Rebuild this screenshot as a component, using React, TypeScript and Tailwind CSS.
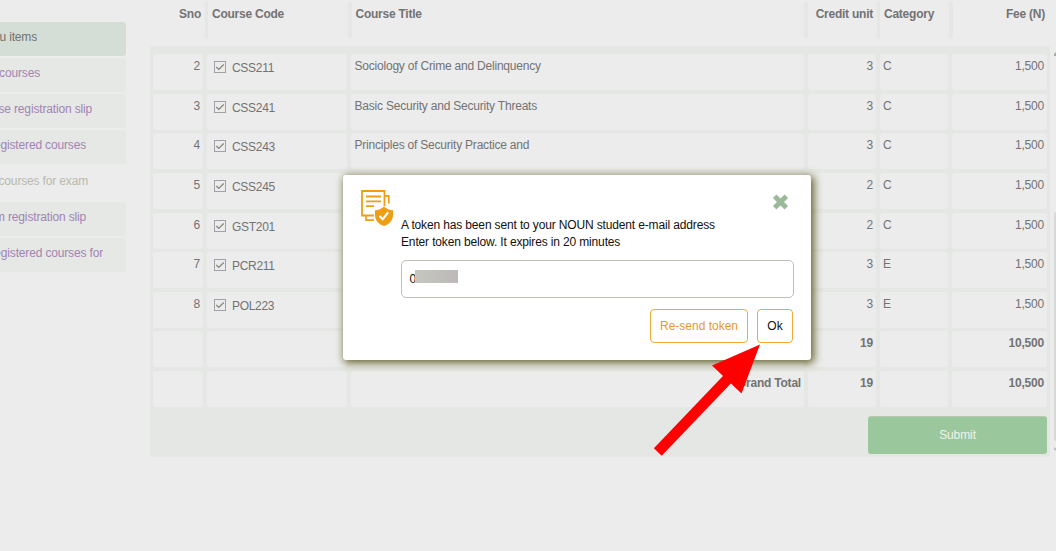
import React from "react";

type Item = { label: string; width: string; tone: string };

const menu: Item[] = [
  { label: "u items", width: "w-[37px]", tone: "h-[34px] bg-[#d5ded6] text-[#707370]" },
  { label: "courses", width: "w-[40px]", tone: "h-[34px] bg-[#e5e8e5] text-[#a383b4]" },
  { label: "se registration slip", width: "w-[92px]", tone: "h-[34px] bg-[#e5e8e5] text-[#a383b4]" },
  { label: "egistered courses", width: "w-[86px]", tone: "h-[34px] bg-[#e5e8e5] text-[#a383b4]" },
  { label: "courses for exam", width: "w-[88px]", tone: "h-[34px] text-[#b9b9ae]" },
  { label: "m registration slip", width: "w-[86px]", tone: "h-[34px] bg-[#e5e8e5] text-[#a383b4]" },
  { label: "egistered courses for", width: "w-[103px]", tone: "h-[34px] bg-[#e5e8e5] text-[#a383b4]" },
];

type Row = { sno: string; code: string; title: string; unit: string; cat: string; fee: string; bold?: boolean };

const rows: Row[] = [
  { sno: "2", code: "CSS211", title: "Sociology of Crime and Delinquency", unit: "3", cat: "C", fee: "1,500" },
  { sno: "3", code: "CSS241", title: "Basic Security and Security Threats", unit: "3", cat: "C", fee: "1,500" },
  { sno: "4", code: "CSS243", title: "Principles of Security Practice and", unit: "3", cat: "C", fee: "1,500" },
  { sno: "5", code: "CSS245", title: "", unit: "2", cat: "C", fee: "1,500" },
  { sno: "6", code: "GST201", title: "", unit: "2", cat: "C", fee: "1,500" },
  { sno: "7", code: "PCR211", title: "", unit: "3", cat: "E", fee: "1,500" },
  { sno: "8", code: "POL223", title: "", unit: "3", cat: "E", fee: "1,500" },
  { sno: "", code: "", title: "", unit: "19", cat: "", fee: "10,500", bold: true },
  { sno: "", code: "", title: "Grand Total", unit: "19", cat: "", fee: "10,500", bold: true },
];

const cell = "rounded-[3px] bg-[#ececec] px-[3px] pt-1";

function Checkbox() {
  return (
    <svg width="12" height="12" viewBox="0 0 12 12" className="mt-[3px] shrink-0" fill="none">
      <rect x="0.5" y="0.5" width="11" height="11" stroke="#a2a1a9" />
      <path d="M2.3 6 4.8 8.4 9.7 3.5" stroke="#85867c" strokeWidth="1.3" />
    </svg>
  );
}

function CourseRow({ row }: { row: Row }) {
  return (
    <div
      className={`grid h-9 shrink-0 grid-cols-[50px_140px_453px_68px_68px_95px] gap-1 tracking-[-0.21px] ${row.bold ? "font-bold" : ""}`}
    >
      <div className={`${cell} text-right`}>{row.sno}</div>
      <div className={`${cell} flex gap-[6px] pl-[7px]`}>
        {row.code && (
          <>
            <Checkbox />
            <span className="pt-[2px] tracking-[-0.3px]">{row.code}</span>
          </>
        )}
      </div>
      <div className={`${cell} ${row.bold ? "text-right" : "pl-[3.5px]"}`}>{row.title}</div>
      <div className={`${cell} text-right`}>{row.unit}</div>
      <div className={cell}>{row.cat}</div>
      <div className={`${cell} text-right`}>{row.fee}</div>
    </div>
  );
}

function TableHeader() {
  return (
    <div className="mt-px flex h-9 font-bold tracking-[-0.24px]">
      <div className="w-[55px] pt-1 pr-[4px] text-right">Sno</div>
      <div className="w-[3px] bg-[#e5e7e4]" />
      <div className="w-[140px] pt-1 pl-1">Course Code</div>
      <div className="w-1 bg-[#e5e7e4]" />
      <div className="w-[452px] pt-1 pl-[3.5px]">Course Title</div>
      <div className="w-[4px] bg-[#e5e7e4]" />
      <div className="w-[69px] pt-1 pr-[4px] text-right">Credit unit</div>
      <div className="w-[3px] bg-[#e5e7e4]" />
      <div className="w-[69px] pt-1 pl-[4px]">Category</div>
      <div className="w-[4px] bg-[#e5e7e4]" />
      <div className="w-[97px] pt-1 pr-[5px] text-right">Fee (N)</div>
    </div>
  );
}

function TokenIcon() {
  return (
    <svg width="34" height="38" viewBox="0 0 34 38" fill="none" stroke="#ef9d13">
      <path d="M24.5 17V2H2V26.5H14" strokeWidth="1.8" />
      <path d="M25 6.8H28.8V14.500M6 27V31.2H14" strokeWidth="1.7" />
      <path d="M6 7.5H21M6 12.3H21M6 17.2H14" strokeWidth="1.8" />
      <path
        d="M24 17.5C26.5 20 29.5 21 33 21.2V26C33 31.5 29 35.5 24 37C19 35.5 15 31.5 15 26V21.2C18.5 21 21.5 20 24 17.5Z"
        fill="#ef9d13"
        stroke="none"
      />
      <path d="M19.5 27 22.7 30.2 28.2 23.3" stroke="#fff" strokeWidth="2.2" />
    </svg>
  );
}

function TokenDialog() {
  return (
    <div className="absolute top-[175px] left-[343px] h-[185px] w-[468px] rounded-[3px] bg-white text-[#111] shadow-[2px_2px_8px_1px_#66642f]">
      <div className="flex h-[42px] items-start justify-between pt-[14px] pr-[22px] pl-[17px]">
        <TokenIcon />
        <svg width="17" height="17" viewBox="0 0 17 17" className="mt-[5px]">
          <path d="M2.7 2.2 14.3 13.8M14.3 2.2 2.7 13.8" stroke="#9cba9a" strokeWidth="5" />
        </svg>
      </div>
      <div className="pr-[17px] pl-[58px]">
        <p className="leading-[17px] tracking-[-0.145px]">A token has been sent to your NOUN student e-mail address</p>
        <p className="leading-[17px] tracking-[-0.145px]">Enter token below. It expires in 20 minutes</p>
        <div className="mt-[8.5px] flex h-[38px] items-center rounded-[5px] border border-[#bfbfb8] pl-[7.5px]">
          <span>0</span>
          <span className="-ml-[1.5px] mb-[5px] h-[13px] w-[43px] bg-linear-to-r from-[#c5c7bf] to-[#bdb9b9]" />
        </div>
        <div className="mt-[11px] flex justify-end gap-[9px] pr-px">
          <button className="h-[34px] w-[98px] rounded-[4px] border border-[#f3ab35] pt-px text-[#e39b28]">
            Re-send token
          </button>
          <button className="h-[34px] w-[36px] rounded-[4px] border border-[#f3ab35] pt-px">Ok</button>
        </div>
      </div>
    </div>
  );
}

export default function App() {
  return (
    <div className="relative flex h-[551px] w-[1056px] overflow-hidden bg-[#ececec] font-['Liberation_Sans',Arial,sans-serif] text-[12px] leading-4 text-[#737373]">
      <nav className="flex w-[126px] shrink-0 flex-col gap-[2px] pt-[22px]">
        {menu.map((m) => (
          <div key={m.label} className={`rounded-r-[3px] pt-[7px] tracking-[-0.16px] ${m.tone}`}>
            <div className={`flex justify-end overflow-hidden whitespace-nowrap ${m.width}`}>
              <span>{m.label}</span>
            </div>
          </div>
        ))}
      </nav>

      <main className="ml-6 w-[900px] shrink-0">
        <div className="h-[46px] pt-px">
          <TableHeader />
        </div>
        <section className="h-[411px] rounded-[3px] bg-[#e5e7e4] px-[3px] pt-2">
          <div className="flex flex-col gap-[3.625px]">
            {rows.map((row, i) => (
              <CourseRow key={i} row={row} />
            ))}
          </div>
          <div className="mt-[9px] flex justify-end">
            <button className="h-[38px] w-[179px] rounded-[3px] border-t border-[#b9c6b0] bg-[#9ac79b] pb-[2px] tracking-[-0.1px] text-[#eef3ee]">
              Submit
            </button>
          </div>
        </section>
      </main>

      <div className="ml-1 flex w-[2px] shrink-0 flex-col pt-[52px]">
        <svg width="2" height="4" viewBox="0 0 2 4">
          <path d="M0 4V2L2 0V4Z" fill="#a7a7a7" />
        </svg>
        <div className="mt-[156px] h-[229px] rounded-l-[2px] bg-[#d9d9d9]" />
        <svg width="2" height="4" viewBox="0 0 2 4" className="mt-[6px]">
          <path d="M0 0 2 2V4L0 2Z" fill="#b4b4a8" />
        </svg>
      </div>

      <TokenDialog />

      <svg width="108" height="112" viewBox="0 0 108 112" className="absolute top-[344px] left-[653px]">
        <path d="M4.8 108 77 32.500" stroke="#fe0000" strokeWidth="10.8" />
        <path d="M107 .5 59 21.500 88.500 49.500Z" fill="#fe0000" />
      </svg>
    </div>
  );
}
